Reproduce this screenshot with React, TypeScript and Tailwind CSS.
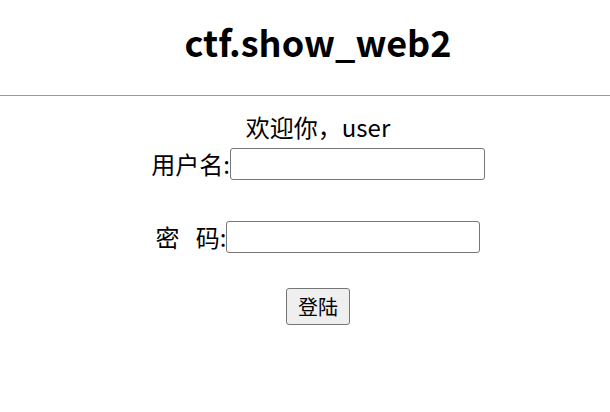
import React from 'react'

const font = { fontFamily: '"Noto Sans CJK SC", "Noto Sans", sans-serif' }

export default function App() {
  return (
    <div className="min-h-screen bg-white text-black text-[24px]" style={font}>
      <div className="pl-[26px] pt-[15px] pb-[28px] text-center">
        <h1 className="text-[36px] font-bold leading-[52px]">ctf.show_web2</h1>
      </div>
      <hr className="border-t border-[#9a9a9a]" />
      <div className="pl-[26px] pt-[19px] flex flex-col items-center">
        <p className="leading-[24px]">欢迎你，user</p>
        <div className="mt-[9px] flex items-center">
          <span className="leading-[32px]">用户名:</span>
          <input className="w-[255px] h-[32px] border border-[#767676] rounded-[3px] px-1 text-[16px]" />
        </div>
        <div className="mt-[41px] flex items-center">
          <span className="leading-[32px] whitespace-pre">密   码:</span>
          <input type="password" className="w-[254px] h-[32px] border border-[#767676] rounded-[3px] px-1 text-[16px]" />
        </div>
        <button className="mt-[35px] h-[37px] px-[11px] bg-[#efefef] border border-[#767676] rounded-[3px] text-[20px] leading-none">
          登陆
        </button>
      </div>
    </div>
  )
}
